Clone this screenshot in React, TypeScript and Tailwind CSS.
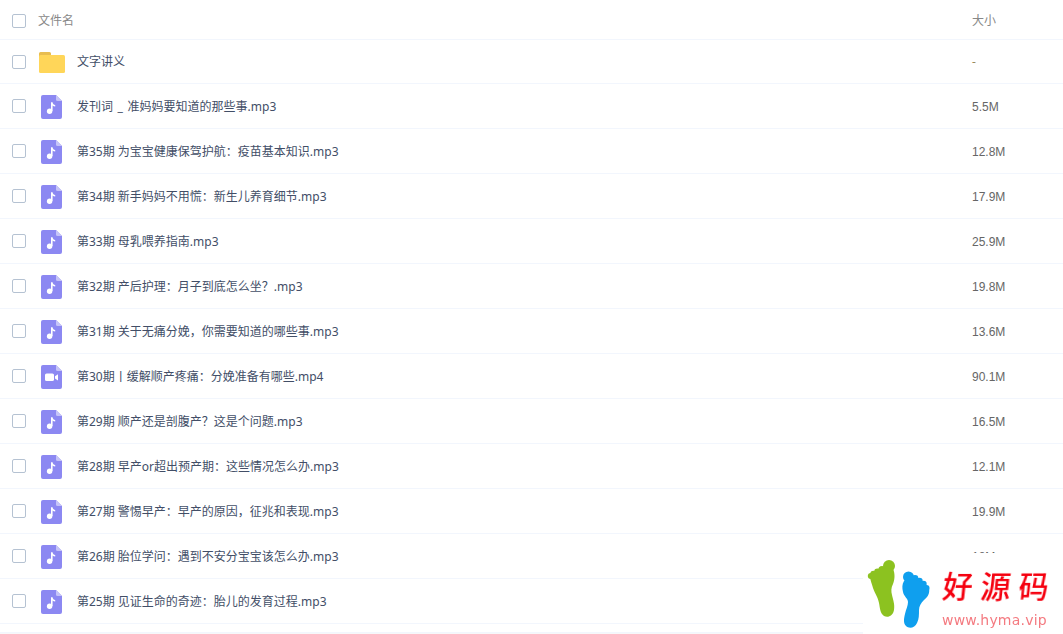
const FONT = 'font-["Noto_Sans","Noto_Sans_CJK_SC",sans-serif]';
const SIZE_FONT = 'font-["Liberation_Sans","Noto_Sans_CJK_SC",sans-serif]';

const rows: [string, string, "a" | "v"][] = [
  ["发刊词 _ 准妈妈要知道的那些事.mp3", "5.5M", "a"],
  ["第35期 为宝宝健康保驾护航：疫苗基本知识.mp3", "12.8M", "a"],
  ["第34期 新手妈妈不用慌：新生儿养育细节.mp3", "17.9M", "a"],
  ["第33期 母乳喂养指南.mp3", "25.9M", "a"],
  ["第32期 产后护理：月子到底怎么坐？.mp3", "19.8M", "a"],
  ["第31期 关于无痛分娩，你需要知道的哪些事.mp3", "13.6M", "a"],
  ["第30期丨缓解顺产疼痛：分娩准备有哪些.mp4", "90.1M", "v"],
  ["第29期 顺产还是剖腹产？这是个问题.mp3", "16.5M", "a"],
  ["第28期 早产or超出预产期：这些情况怎么办.mp3", "12.1M", "a"],
  ["第27期 警惕早产：早产的原因，征兆和表现.mp3", "19.9M", "a"],
  ["第26期 胎位学问：遇到不安分宝宝该怎么办.mp3", "18M", "a"],
  ["第25期 见证生命的奇迹：胎儿的发育过程.mp3", "", "a"],
];

function Check({ className = "" }: { className?: string }) {
  return <span className={`block w-[14px] h-[14px] ml-[12px] rounded-[2px] border border-[#b5c2d2] bg-white shrink-0 ${className}`} />;
}

function FileIcon({ kind }: { kind: "a" | "v" }) {
  return (
    <svg width="21" height="24" viewBox="0 0 21 24" className="block">
      <path d="M2 0H15L21 6V22a2 2 0 0 1-2 2H2a2 2 0 0 1-2-2V2a2 2 0 0 1 2-2Z" fill="#8c88f2" />
      <path d="M15 0L21 6H16.5A1.5 1.5 0 0 1 15 4.5Z" fill="#c5c3f8" />
      {kind === "a" ? (
        <>
          <circle cx="8.6" cy="16.2" r="2.7" fill="#fff" />
          <path d="M10 16V7.2h1.6c.1 1.7 1.2 2.5 2.6 2.8v1.6c-1.1-.1-2-.5-2.6-1.1V16Z" fill="#fff" />
        </>
      ) : (
        <>
          <rect x="4" y="8.5" width="9" height="7.5" rx="1.6" fill="#fff" />
          <path d="M14 11.2 17 9.3v6.1l-3-1.9Z" fill="#fff" />
        </>
      )}
    </svg>
  );
}

function FolderIcon() {
  return (
    <svg width="26" height="21" viewBox="0 0 26 21" className="block">
      <path d="M1.5 0H10.5A1.5 1.5 0 0 1 12 1.5V5H0V1.5A1.5 1.5 0 0 1 1.5 0Z" fill="#e8bd50" />
      <rect x="0" y="3" width="26" height="18" rx="1.5" fill="#ffd659" />
    </svg>
  );
}

function GreenFoot() {
  return (
    <svg width="30" height="60" viewBox="0 0 30 60" className="block">
      <g fill="#8cc220">
        <circle cx="22" cy="7" r="6" />
        <circle cx="15" cy="10.5" r="3.6" />
        <circle cx="10.5" cy="13" r="3.4" />
        <circle cx="6.5" cy="15" r="3.2" />
        <circle cx="3.8" cy="17" r="3" />
        <path d="M3 17C7 12 20 7 26 10c2 4 2 10 0 15-2 4-2 7-1 11 1 5 3 9 2 15-1 6-6 8-10 6-4-3-4-8-5-13-1-6-4-9-6-15-1-4-3-8-3-12Z" />
      </g>
    </svg>
  );
}

function BlueFoot() {
  return (
    <svg width="28" height="58" viewBox="0 0 28 58" className="block">
      <g fill="#0f9fee">
        <circle cx="6.5" cy="6" r="5.5" />
        <circle cx="13" cy="7.5" r="3.4" />
        <circle cx="17.5" cy="10" r="3.2" />
        <circle cx="21.5" cy="13" r="3.2" />
        <circle cx="24.5" cy="17" r="3" />
        <path d="M2 10c5-3 18-2 25 7 1 5-1 9-5 12-3 3-5 6-5 10 0 5 0 9-2 13-2 5-8 6-11 3-3-3-2-8-1-12 1-5 3-8 3-12 0-4-4-5-5-10-1-4-1-8 1-11Z" />
      </g>
    </svg>
  );
}

export default function App() {
  return (
    <div className={`relative w-[1063px] h-[634px] overflow-hidden bg-white ${FONT} text-[12px]`}>
      <div className="flex items-center h-[40px] border-b border-[#f2f6fd] text-[#888888]">
        <Check className="mt-[3px]" />
        <span className="ml-[12px] flex-1 mt-[2px]">文件名</span>
        <span className="w-[91px] mt-[2px]">大小</span>
      </div>
      <div className="flex items-center h-[44px] border-b border-[#f2f6fd]">
        <Check />
        <span className="ml-[13px] w-[26px] flex justify-center mt-[1px]"><FolderIcon /></span>
        <span className="ml-[12px] flex-1 text-[#424e67] mt-[1px]">文字讲义</span>
        <span className="w-[91px] text-[#9a8a60] mt-[1px]">-</span>
      </div>
      {rows.map(([name, size, kind], i) => (
        <div key={name} className="flex items-center h-[45px] border-b border-[#f2f6fd]">
          <Check />
          <span className="ml-[12px] w-[26px] flex justify-center mt-[2px]"><FileIcon kind={kind} /></span>
          <span className={`ml-[13px] flex-1 text-[#424e67] mt-[2px] ${i === 0 ? "[word-spacing:1.5px]" : ""}`}>{name}</span>
          <span className={`w-[91px] text-[#666666] mt-[2px] ${SIZE_FONT}`}>{size}</span>
        </div>
      ))}
      <div className="h-[9px] border-b border-[#f2f6fd]" />
      <div className="h-[2px] bg-[#f7f7f9]" />

      <div className="absolute left-[863px] top-[553px] w-[200px] h-[81px] bg-white">
        <div className="absolute left-[4px] top-[6px]"><GreenFoot /></div>
        <div className="absolute left-[39px] top-[18px]"><BlueFoot /></div>
        <div className={`absolute left-[80px] top-[12px] text-[30px] leading-[40px] tracking-[8px] font-medium text-[#f5000f] whitespace-nowrap -skew-x-6 blur-[0.3px] font-["Noto_Sans_CJK_SC",sans-serif]`}>好源码</div>
        <div className="absolute left-[79px] top-[59px] text-[14px] leading-[16px] tracking-[0.2px] text-[#f47a80] whitespace-nowrap blur-[0.3px] font-['DejaVu_Sans',sans-serif]">www.hyma.vip</div>
      </div>
    </div>
  );
}
